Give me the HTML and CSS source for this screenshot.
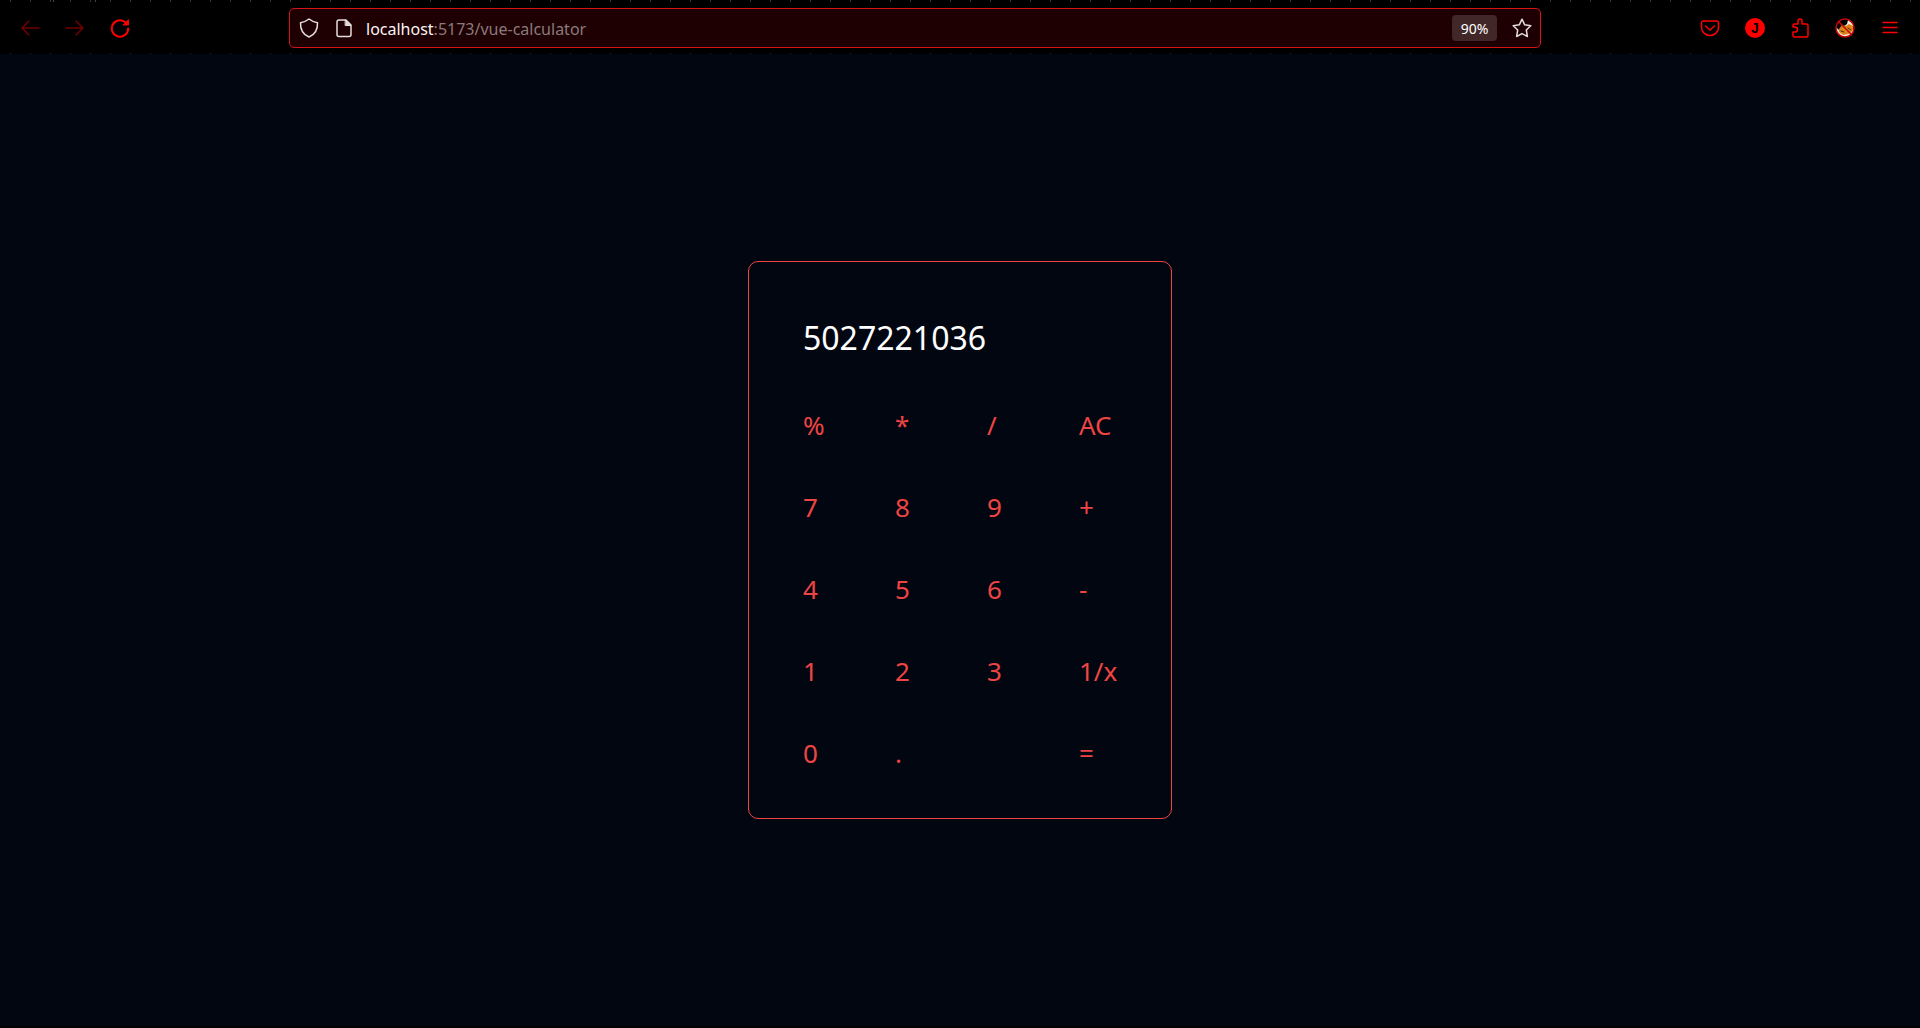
FILE: index.html
```html
<!DOCTYPE html>
<html lang="en">
<head>
<meta charset="utf-8">
<title>Vue Calculator</title>
<link rel="stylesheet" href="styles.css">
</head>
<body>
<header class="toolbar">
  <nav class="nav" aria-label="Navigation">
    <button class="icon-btn dim" aria-label="Back"><svg viewBox="0 0 20 20"><path d="M19 10H2M9 3L2 10l7 7"/></svg></button>
    <button class="icon-btn dim" aria-label="Forward"><svg viewBox="0 0 20 20"><path d="M1 10h17M11 3l7 7-7 7"/></svg></button>
    <button class="icon-btn" aria-label="Reload"><svg viewBox="0 0 20 20"><path class="thick" d="M18.200 10.500A8.200 8.200 0 1 1 15 4"/><path class="solid" d="M18.500 2v5h-5z"/></svg></button>
  </nav>
  <div class="address">
    <div class="group">
      <button class="icon-btn pale" aria-label="Tracking protection"><svg viewBox="0 0 20 20"><path d="M10 1C7.500 3 4.500 4.200 1.500 4.800c-.2 6 1.500 11.500 8.500 14.200 7-2.700 8.700-8.200 8.500-14.200C15.500 4.200 12.500 3 10 1z"/></svg></button>
      <button class="icon-btn pale" aria-label="Site information"><svg viewBox="0 0 20 20"><path d="M5 2h7l5 5v9.500a2 2 0 0 1-2 2H5a2 2 0 0 1-2-2V4a2 2 0 0 1 2-2z"/><path class="solid" d="M11.500 2l5.500 5.500h-5.500z"/></svg></button>
    </div>
    <a class="url" href="#"><span class="host">localhost</span>:5173/vue-calculator</a>
    <div class="group">
      <button class="zoom-level">90%</button>
      <button class="icon-btn pale" aria-label="Bookmark"><svg viewBox="0 0 20 20"><path d="M10 1.200l2.700 5.600 6.100.9-4.500 4.300 1.100 6.500L10 15.600l-5.400 2.900 1.100-6.500L1.200 7.700l6.100-.9z"/></svg></button>
    </div>
  </div>
  <div class="extensions">
    <button class="icon-btn" aria-label="Save to Pocket"><svg viewBox="0 0 20 20"><path d="M3.500 3h13a2 2 0 0 1 2 2v4.500a8.500 8 0 0 1-17 0V5a2 2 0 0 1 2-2z"/><path d="M5.500 8l4.500 4 4.500-4"/></svg></button>
    <button class="icon-btn avatar" aria-label="Account">J</button>
    <button class="icon-btn" aria-label="Extensions"><svg viewBox="0 0 20 20"><path d="M3 9V7.500A1.500 1.500 0 0 1 4.500 6H8V3a2 2 0 0 1 4 0v3h4.500A1.500 1.500 0 0 1 18 7.500v10a1.500 1.500 0 0 1-1.500 1.500h-12A1.500 1.500 0 0 1 3 17.500V14h2a2.500 2.500 0 0 0 0-5z"/></svg></button>
    <button class="icon-btn" aria-label="Blocker"><svg viewBox="0 0 20 20"><g class="fox"><path class="fox-light" d="M1 9l3 3 8-6 1-4 5 4v9l-6 4-6-1-4-4z"/><path class="fox-body" d="M4 11l3-4 4 1 3-2 4 2v4l-4 4-6 1-4-3z"/><path class="fox-dark" d="M6 13l3 1M13 10l3 2"/></g><circle class="ban" cx="10" cy="10" r="9"/><path class="ban" d="M3.500 3.500l13 13"/></svg></button>
    <button class="icon-btn" aria-label="Menu"><svg viewBox="0 0 20 20"><path d="M3 4.500h14M3 9.500h14M3 14.500h14"/></svg></button>
  </div>
</header>
<main class="stage">
  <section class="calculator" aria-label="Calculator">
    <output class="display">5027221036</output>
    <div class="keys">
      <button>%</button><button>*</button><button>/</button><button>AC</button>
      <button>7</button><button>8</button><button>9</button><button>+</button>
      <button>4</button><button>5</button><button>6</button><button>-</button>
      <button>1</button><button>2</button><button>3</button><button>1/x</button>
      <button>0</button><button>.</button><button class="equals">=</button>
    </div>
  </section>
</main>
</body>
</html>
```
FILE: styles.css
```css
* {
  box-sizing: border-box;
}

body {
  margin: 0;
  min-height: 100vh;
  display: flex;
  flex-direction: column;
  background: #020610;
  font-family: "Noto Sans", "Open Sans", sans-serif;
}

button {
  margin: 0;
  padding: 0;
  border: 0;
  background: none;
  color: inherit;
  font: inherit;
  cursor: pointer;
}

.toolbar {
  height: 54px;
  padding: 8px 20px 6px;
  display: grid;
  grid-template-columns: 269px 1fr 359px;
  background:
    repeating-linear-gradient(90deg, transparent 0 10px, #333 10px 11px, transparent 11px 20px) top / 100% 2px no-repeat,
    repeating-linear-gradient(90deg, transparent 0 10px, #222 10px 11px, transparent 11px 20px) bottom / 100% 1px no-repeat,
    linear-gradient(#444, #444) 53px 0 / 1px 2px no-repeat,
    linear-gradient(#444, #444) 95px 0 / 1px 2px no-repeat,
    #000;
}

.nav,
.extensions,
.group,
.address {
  display: flex;
  align-items: center;
}

.nav {
  gap: 25px;
  color: #f00;
}

.icon-btn {
  width: 20px;
  height: 20px;
  flex: none;
}

.icon-btn svg {
  display: block;
  width: 20px;
  height: 20px;
  fill: none;
  stroke: currentColor;
  stroke-width: 1.5;
  stroke-linecap: round;
  stroke-linejoin: round;
}

.icon-btn .thick {
  stroke-width: 2;
}

.icon-btn .solid {
  fill: currentColor;
  stroke-width: 1;
}

.dim {
  color: #700000;
}

.pale {
  color: #e5dcdc;
}

.address {
  gap: 12px;
  padding: 0 8px 0 9px;
  border: 1px solid #d41414;
  border-radius: 5px;
  background: #1e0002;
}

.group {
  gap: 15px;
}

.url {
  flex: 1;
  padding-top: 2px;
  font-size: 16px;
  line-height: 24px;
  color: #8b7a7b;
  text-decoration: none;
}

.host {
  color: #fbf5f5;
}

.zoom-level {
  width: 45px;
  height: 26px;
  border-radius: 4px;
  background: #422728;
  color: #fff;
  font-size: 14px;
}

.extensions {
  justify-content: flex-end;
  gap: 25px;
  color: #f00;
}

.avatar {
  border-radius: 50%;
  background: #f00;
  color: #000;
  font-family: "Liberation Sans", sans-serif;
  font-size: 14px;
  font-weight: 700;
  line-height: 20px;
}

.fox {
  stroke: none;
}

.fox-light {
  fill: #f4efe4;
}

.fox-body {
  fill: #dc8418;
}

.fox-dark {
  stroke: #4a2a10;
  stroke-width: 1;
}

.ban {
  stroke: #c8060a;
}

.stage {
  flex: 1;
  display: flex;
  align-items: center;
  justify-content: center;
  border-bottom: 2px solid #000;
}

.calculator {
  padding: 53px 54px 47px;
  display: grid;
  gap: 46px;
  border: 1px solid #ef4444;
  border-radius: 10px;
}

.display {
  font-size: 32px;
  line-height: 46px;
  color: #fff;
}

.keys {
  display: grid;
  grid-template-columns: repeat(4, 38px);
  gap: 46px 54px;
  color: #ef4444;
}

.keys button {
  font-size: 26px;
  line-height: 36px;
  text-align: left;
  white-space: nowrap;
}

.equals {
  grid-column: 4;
}
```
